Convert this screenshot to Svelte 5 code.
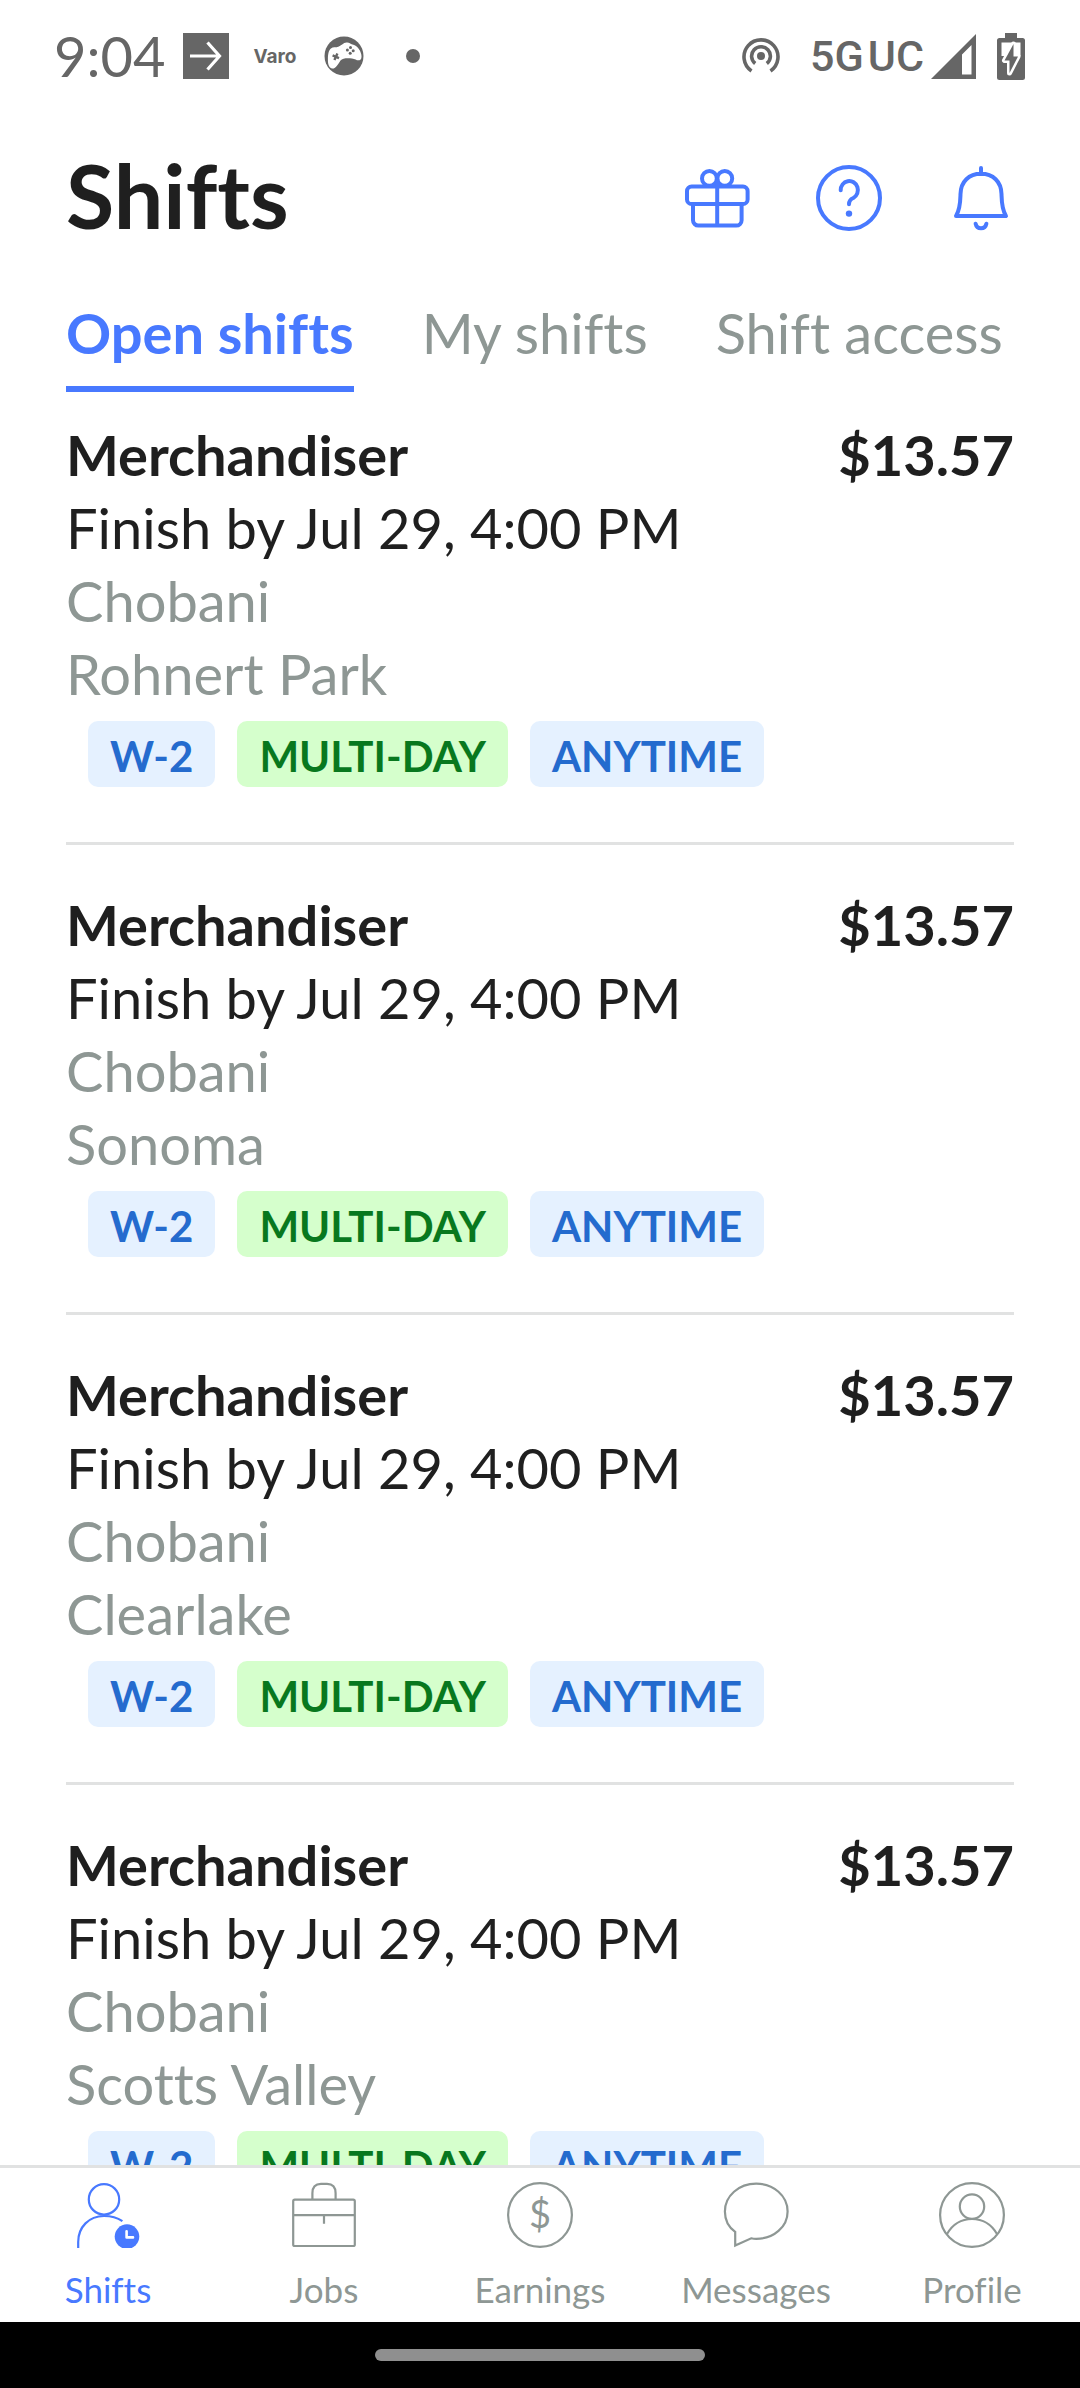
<script lang="ts">
  type IconName = 'shifts' | 'jobs' | 'earnings' | 'messages' | 'profile';

  interface Shift {
    role: string;
    pay: string;
    finish: string;
    company: string;
    city: string;
  }

  const tabs = ['Open shifts', 'My shifts', 'Shift access'];
  const cities = ['Rohnert Park', 'Sonoma', 'Clearlake', 'Scotts Valley'];

  const shifts: Shift[] = cities.map((city) => ({
    role: 'Merchandiser',
    pay: '$13.57',
    finish: 'Finish by Jul 29, 4:00 PM',
    company: 'Chobani',
    city,
  }));

  const tags = [
    { label: 'W-2', tone: 'blue' },
    { label: 'MULTI-DAY', tone: 'green' },
    { label: 'ANYTIME', tone: 'blue' },
  ];

  const links: { icon: IconName; label: string }[] = [
    { icon: 'shifts', label: 'Shifts' },
    { icon: 'jobs', label: 'Jobs' },
    { icon: 'earnings', label: 'Earnings' },
    { icon: 'messages', label: 'Messages' },
    { icon: 'profile', label: 'Profile' },
  ];

  let activeTab = $state('Open shifts');
  let activeLink = $state<IconName>('shifts');
</script>

{#snippet navIcon(name: IconName)}
  <svg class="nav-icon" viewBox="0 0 66 66" aria-hidden="true">
    {#if name === 'shifts'}
      <circle cx="29" cy="17.4" r="15.2" />
      <path d="M3.2 66V60C3.2 45 14 34 29 34c7 0 13 1.5 18.4 5.2" />
      <circle class="solid" cx="52" cy="54.6" r="12.3" />
      <path class="hands" d="M51.6 49.2v6.2h6.4" />
    {:else if name === 'jobs'}
      <rect x="2.2" y="17.6" width="61.6" height="46.4" rx="1.6" />
      <path d="M2.2 33.2h61.6M33 33.2v8.6M21.4 17.4v-6.2c0-6.4 3-9.4 8.6-9.4h6c5.6 0 8.6 3 8.6 9.4v6.2" />
    {:else if name === 'earnings'}
      <circle cx="33" cy="33" r="31.9" />
      <text x="33" y="46" text-anchor="middle">$</text>
    {:else if name === 'messages'}
      <path class="sharp" d="M12.2 63.6V49.8C5.5 45 1.9 37.4 1.9 29.4 1.9 14 15.7 1.7 33.2 1.7S64.6 14 64.6 29.4 50.8 56.9 33.2 56.9c-1.8 0-3.4-.2-5-.6Z" />
    {:else}
      <circle cx="33" cy="33" r="31.9" />
      <circle cx="33" cy="24.6" r="12.2" />
      <path d="M8 52C13.5 42.5 22.5 37 33 37s19.5 5.5 25 15" />
    {/if}
  </svg>
{/snippet}

<div class="screen">
  <div class="status">
    <time>9:04</time>
    <div class="notices">
      <span class="notice">
        <svg width="46" height="46" viewBox="0 0 46 46" aria-hidden="true">
          <path fill="currentColor" d="M0 0h46v46H0z" />
          <path fill="none" stroke="#fff" stroke-width="3.2" d="M7 23h29M24.5 9.5 36.5 23l-12 13.5" />
        </svg>
      </span>
      <span class="notice varo">Varo</span>
      <span class="notice">
        <svg width="40" height="40" viewBox="0 0 40 40" aria-hidden="true">
          <circle cx="20" cy="20" r="19.5" fill="currentColor" />
          <path fill="#fff" d="M8 32.5C4.5 32 3.8 27 3.9 23c.1-5 .8-9 3-10.6 2-1.4 5-.5 8-1.8C18 9.2 19 7 22.5 6.6c3-.3 3.5 1.4 6 2C33 9.5 36.2 14 37.2 18c.8 3.4.2 5.6-1.7 6.2-2.5.8-4-1.4-7.5-1.8-4-.4-9.5-.6-11.5 2-2 2.800-4.5 8.5-8.5 8.1Z" />
          <path stroke="currentColor" stroke-width="2.4" d="m8.600 19.4 6.4 2.8M13.400 17.6l-3 6.4" />
          <g fill="currentColor">
            <circle cx="26.5" cy="11.6" r="1.5" />
            <circle cx="29.2" cy="14.8" r="1.5" />
            <circle cx="23.4" cy="14" r="1.5" />
            <circle cx="26.2" cy="17.2" r="1.5" />
          </g>
        </svg>
      </span>
      <span class="notice"><span class="dot"></span></span>
    </div>
    <svg width="38" height="38" viewBox="0 0 38 38" aria-hidden="true">
      <circle cx="19" cy="19" r="4" fill="currentColor" />
      <g fill="none" stroke="currentColor" stroke-width="3.6">
        <path d="M13.2 26.5a9.4 9.4 0 1 1 11.6 0" />
        <path d="M9.5 34a17 17 0 1 1 19 0" />
      </g>
    </svg>
    <span class="network"><span>5G</span><span>UC</span></span>
    <svg class="signal" width="45" height="45" viewBox="0 0 45 45" aria-hidden="true">
      <path fill="currentColor" fill-rule="evenodd" d="M45 0v45H0ZM40.5 11 31 20.5V40.5h9.5Z" />
    </svg>
    <svg width="30" height="47" viewBox="0 0 30 47" aria-hidden="true">
      <path fill="currentColor" d="M9 0h12v5h5.5A2.5 2.5 0 0 1 29 7.5v37a2.5 2.5 0 0 1-2.5 2.5h-23A2.5 2.5 0 0 1 1 44.5v-37A2.5 2.5 0 0 1 3.5 5H9Z" />
      <path fill="#fff" d="M5.5 9.500h19V23h-19z" />
      <path class="bolt" d="M17.5 11 8.5 27.5h5V40L22 23.5h-4.5Z" />
    </svg>
  </div>

  <header>
    <h1>Shifts</h1>
    <div class="actions">
      <button aria-label="Rewards">
        <svg viewBox="0 0 66 66">
          <circle cx="25.4" cy="13.4" r="7.4" />
          <circle cx="40.8" cy="13.4" r="7.4" />
          <rect x="3" y="21.6" width="60.6" height="17.4" rx="4.6" />
          <path d="M9 39v16.2a5.4 5.4 0 0 0 5.4 5.4h37.8a5.4 5.4 0 0 0 5.4-5.4V39M33.2 14v46" />
        </svg>
      </button>
      <button aria-label="Help">
        <svg viewBox="0 0 66 66">
          <circle cx="33" cy="33" r="31" />
          <path d="M24.7 25.3a8.600 9 0 1 1 12.6 7.7c-3 1.2-4.3 2.6-4.3 6.3" />
          <circle class="solid" cx="33" cy="48.6" r="3.2" />
        </svg>
      </button>
      <button aria-label="Notifications">
        <svg viewBox="0 0 66 66">
          <path d="M33 3v6M8 51c4.4-7 4.3-14.5 4.5-22C12.8 16.500 21 8.800 33 8.800S53.200 16.500 53.5 29c.2 7.500.1 15 4.5 22Z" />
          <path d="M27.6 58.7c1.2 6.2 9.6 6.2 10.8 0" />
        </svg>
      </button>
    </div>
  </header>

  <div class="tabs" role="tablist">
    {#each tabs as tab}
      <button role="tab" aria-selected={activeTab === tab} class:active={activeTab === tab} onclick={() => (activeTab = tab)}>{tab}</button>
    {/each}
  </div>

  <ul class="shifts">
    {#each shifts as shift}
      <li>
        <div class="top">
          <h2>{shift.role}</h2>
          <strong>{shift.pay}</strong>
        </div>
        <p>{shift.finish}</p>
        <p class="muted">{shift.company}</p>
        <p class="muted">{shift.city}</p>
        <div class="tags">
          {#each tags as tag}
            <span class="tag {tag.tone}">{tag.label}</span>
          {/each}
        </div>
      </li>
    {/each}
  </ul>

  <nav>
    {#each links as link}
      <a href="#{link.icon}" class:active={activeLink === link.icon} onclick={() => (activeLink = link.icon)}>
        {@render navIcon(link.icon)}
        <span>{link.label}</span>
      </a>
    {/each}
  </nav>

  <div class="gesture"><span></span></div>
</div>

<style>
  :global(body) {
    margin: 0;
    background: #fff;
  }

  .screen {
    --blue: #4879ff;
    --ink: #1f1f1f;
    --muted: #8e9794;
    --line: #e1e2e2;

    display: flex;
    flex-direction: column;
    height: 100vh;
    overflow: hidden;
    background: #fff;
    color: var(--ink);
    font-family: Lato, sans-serif;
    font-size: 56px;
    font-variant-ligatures: none;
  }

  svg {
    display: block;
    flex: none;
  }

  button {
    padding: 0;
    border: 0;
    background: none;
    font: inherit;
    font-variant-ligatures: inherit;
    cursor: pointer;
  }

  .status {
    display: flex;
    align-items: center;
    height: 112px;
    padding: 0 54px;
    color: #666;
  }

  time {
    line-height: 56px;
  }

  .notices {
    display: flex;
    flex: 1;
    margin-left: 6px;
  }

  .notice {
    display: flex;
    align-items: center;
    justify-content: center;
    width: 69px;
  }

  .varo {
    font: 700 19px Inter, sans-serif;
  }

  .dot {
    width: 14px;
    height: 14px;
    border-radius: 50%;
    background: currentColor;
  }

  .network {
    display: flex;
    gap: 4px;
    margin: 0 7px 0 30px;
    font: 500 43px Roboto, sans-serif;
  }

  .signal {
    margin-right: 20px;
  }

  .bolt {
    fill: currentColor;
    stroke: #fff;
    stroke-width: 5;
    stroke-linejoin: round;
    paint-order: stroke;
  }

  header {
    display: flex;
    align-items: flex-start;
    justify-content: space-between;
    padding: 53px 66px 0;
  }

  h1 {
    margin: 0;
    font-size: 88px;
    font-weight: 700;
    line-height: 60px;
  }

  .actions {
    display: flex;
    gap: 66px;

    & svg {
      width: 66px;
      height: 66px;
      fill: none;
      stroke: var(--blue);
      stroke-width: 4;
      stroke-linecap: round;
      stroke-linejoin: round;
    }

    & .solid {
      fill: var(--blue);
      stroke: none;
    }
  }

  .tabs {
    display: flex;
    gap: 68px;
    padding: 74px 66px 0;

    & button {
      padding-bottom: 25px;
      border-bottom: 6px solid transparent;
      color: var(--muted);
      line-height: 56px;
      white-space: nowrap;
    }

    & .active {
      border-color: var(--blue);
      color: var(--blue);
      font-weight: 700;
    }
  }

  .shifts {
    flex: 1;
    min-height: 0;
    margin: 0;
    padding: 26px 66px 0;
    overflow: hidden;
    list-style: none;
    line-height: 73px;

    & li {
      padding-bottom: 55px;
      border-bottom: 3px solid var(--line);
    }

    & li + li {
      padding-top: 43px;
    }

    & h2,
    & p {
      margin: 0;
      font-size: inherit;
    }

    & .muted {
      color: var(--muted);
    }
  }

  .top {
    display: flex;
    justify-content: space-between;
  }

  .tags {
    display: flex;
    gap: 22px;
    margin: 11px 22px 0;
  }

  .tag {
    padding: 4px 22px 0;
    border-radius: 10px;
    font-size: 42px;
    font-weight: 700;
    line-height: 62px;

    &.blue {
      background: #e5f1ff;
      color: #246bce;
    }

    &.green {
      background: #d5ffcc;
      color: #08781e;
    }
  }

  nav {
    display: grid;
    grid-template-columns: repeat(5, 1fr);
    border-top: 3px solid var(--line);
    background: #fff;

    & a {
      display: flex;
      flex-direction: column;
      align-items: center;
      gap: 20px;
      padding: 14px 0 12px;
      color: var(--muted);
      font-size: 35px;
      line-height: 42px;
      text-decoration: none;
    }

    & .active {
      color: var(--blue);
    }
  }

  .nav-icon {
    width: 66px;
    height: 66px;
    overflow: hidden;
    fill: none;
    stroke: currentColor;
    stroke-width: 2.2;
    stroke-linejoin: round;

    & .solid {
      fill: currentColor;
      stroke: none;
    }

    & .hands {
      stroke: #fff;
      stroke-width: 2.6;
      stroke-linecap: round;
    }

    & .sharp {
      stroke-linejoin: miter;
    }

    & text {
      fill: currentColor;
      stroke: none;
      font-size: 38px;
    }
  }

  .gesture {
    display: flex;
    align-items: center;
    justify-content: center;
    height: 66px;
    background: #000;

    & span {
      width: 330px;
      height: 12px;
      border-radius: 6px;
      background: #8f8f8f;
    }
  }
</style>
